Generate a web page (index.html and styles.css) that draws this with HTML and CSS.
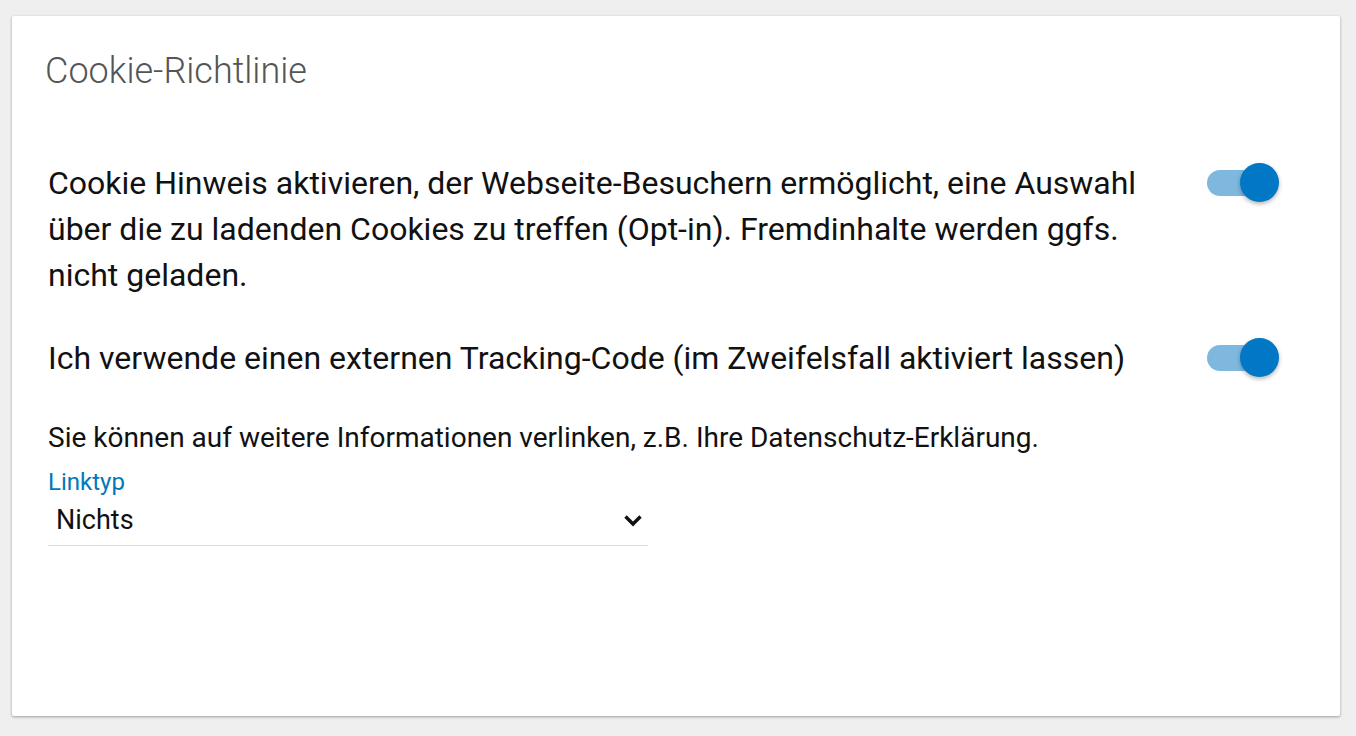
FILE: index.html
```html
<!DOCTYPE html>
<html lang="de">

<head>
  <title>Cookie-Richtlinie</title>
  <link rel="stylesheet" href="styles.css">
</head>

<body>
  <div class="card">
    <h2 class="card-title">Cookie-Richtlinie</h2>

    <div class="option">
      <p class="option-text">Cookie Hinweis aktivieren, der Webseite-Besuchern ermöglicht, eine Auswahl über die zu ladenden Cookies zu treffen (Opt-in). Fremdinhalte werden ggfs. nicht geladen.</p>
      <span class="toggle on"><span class="thumb"></span></span>
    </div>

    <div class="option">
      <p class="option-text">Ich verwende einen externen Tracking-Code (im Zweifelsfall aktiviert lassen)</p>
      <span class="toggle on"><span class="thumb"></span></span>
    </div>

    <p class="hint">Sie können auf weitere Informationen verlinken, z.B. Ihre Datenschutz-Erklärung.</p>

    <div class="field">
      <label class="field-label">Linktyp</label>
      <div class="select">
        <span class="select-value">Nichts</span>
        <svg class="chevron" width="20" height="13" viewBox="0 0 20 13">
          <path d="M2.5 2.5 L10 10 L17.5 2.5" fill="none" stroke="#111" stroke-width="3.4" />
        </svg>
      </div>
    </div>
  </div>
</body>

</html>
```

FILE: styles.css
```css
html,
body {
  margin: 0;
  height: 100%;
  background: #efefef;
}

body {
  padding: 16px 16px 20px 12px;
  box-sizing: border-box;
  font-family: Roboto, "Noto Sans", sans-serif;
  color: #111;
}

.card {
  background: white;
  height: 700px;
  box-sizing: border-box;
  padding: 35px 80px 0 33px;
  box-shadow: 0 1px 3px rgba(0, 0, 0, 0.35);
  border-radius: 2px;
}

.card-title {
  margin: 0 0 69px;
  font-weight: 300;
  font-size: 36px;
  line-height: 40px;
  color: #555;
}

.option {
  display: flex;
  align-items: flex-start;
  justify-content: space-between;
  padding-left: 3px;
  margin-bottom: 37px;
}

.option-text {
  margin: 0;
  max-width: 1120px;
  font-size: 32px;
  line-height: 46px;
}

.toggle {
  position: relative;
  flex: none;
  width: 53px;
  height: 26px;
  margin-top: 10px;
  border-radius: 13px;
  background: #7fb8df;
}

.toggle .thumb {
  position: absolute;
  right: -19px;
  top: -7px;
  width: 39px;
  height: 39px;
  border-radius: 50%;
  background: #0277c5;
  box-shadow: 0 2px 4px rgba(0, 0, 0, 0.3);
}

.hint {
  margin: 42px 0 16px 3px;
  font-size: 28px;
  line-height: 30px;
}

.field {
  width: 600px;
  margin-left: 3px;
}

.field-label {
  display: block;
  font-size: 24px;
  line-height: 26px;
  color: #0277bd;
}

.select {
  display: flex;
  align-items: center;
  justify-content: space-between;
  padding: 10px 5px 10px 8px;
  border-bottom: 1.5px solid #ddd;
}

.select-value {
  font-size: 27px;
  line-height: 30px;
}
```
